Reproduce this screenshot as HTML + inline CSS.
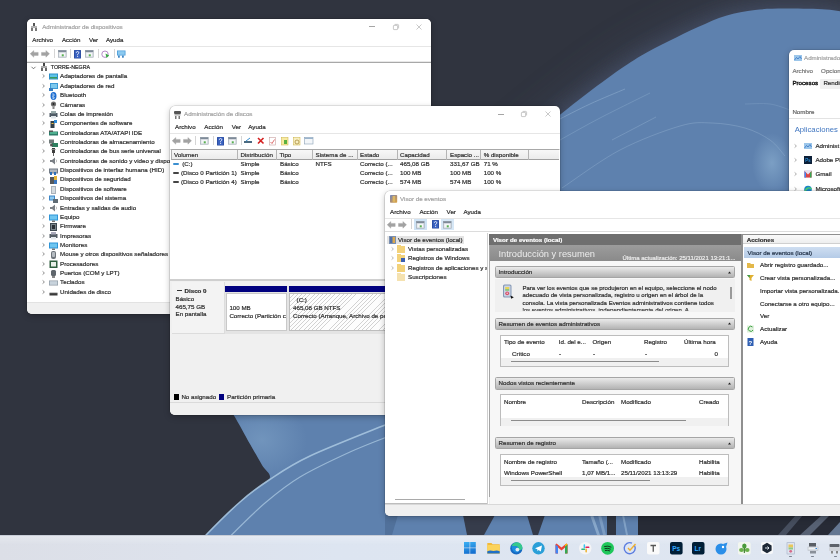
<!DOCTYPE html>
<html><head><meta charset="utf-8"><title>Windows</title>
<style>
html,body{margin:0;padding:0}
body{width:840px;height:560px;overflow:hidden;position:relative;-webkit-font-smoothing:antialiased;background:#30343f;font-family:"Liberation Sans",sans-serif}
.a{position:absolute;white-space:nowrap}
span.a{-webkit-text-stroke:0.2px currentColor}
.w{position:absolute;background:#fff;overflow:hidden;border-radius:5px;will-change:transform;box-shadow:0 0 0 0.6px rgba(0,0,0,0.18),0 2px 6px rgba(0,0,0,0.25)}
svg{overflow:visible}
</style></head><body>
<svg class="a" style="left:0;top:0" width="840" height="560" viewBox="0 0 840 560">
<defs><filter id="blur2" x="-30%" y="-30%" width="160%" height="160%"><feGaussianBlur stdDeviation="22"/></filter><clipPath id="blueclip"><path d="M850.0 13.0 C846.0 12.4 837.0 10.2 826.0 9.5 C815.0 8.8 795.8 8.5 784.0 8.6 C772.2 8.7 764.7 8.8 755.0 10.0 C745.3 11.2 735.5 12.9 726.0 15.7 C716.5 18.5 707.5 22.8 698.0 27.0 C688.5 31.2 678.5 36.2 669.0 41.0 C659.5 45.8 650.5 50.0 641.0 55.7 C631.5 61.4 624.5 66.0 612.0 75.0 C599.5 84.0 584.7 95.0 566.0 110.0 C547.3 125.0 531.0 138.3 500.0 165.0 C469.0 191.7 420.0 239.2 380.0 270.0 C340.0 300.8 287.5 330.3 260.0 350.0 C232.5 369.7 219.5 377.3 215.0 388.0 C210.5 398.7 227.2 404.7 233.0 414.0 C238.8 423.3 245.2 435.5 250.0 444.0 C254.8 452.5 258.8 459.0 262.0 465.0 C265.2 471.0 272.7 473.8 269.0 480.0 C265.3 486.2 250.3 493.0 240.0 502.0 C229.7 511.0 215.3 525.7 207.0 534.0 C198.7 542.3 192.8 549.0 190.0 552.0 L190 560 L850 560 Z"/></clipPath><clipPath id="topclip"><rect x="0" y="0" width="840" height="200"/></clipPath><filter id="blur" x="-20%" y="-20%" width="140%" height="140%"><feGaussianBlur stdDeviation="10"/></filter>
<radialGradient id="glow" cx="0.5" cy="0.5" r="0.5"><stop offset="0" stop-color="#8fb3d3" stop-opacity="0.7"/><stop offset="1" stop-color="#8fb3d3" stop-opacity="0"/></radialGradient><linearGradient id="topdark" x1="0" y1="0" x2="0" y2="1"><stop offset="0" stop-color="#262a34" stop-opacity="0.6"/><stop offset="1" stop-color="#262a34" stop-opacity="0"/></linearGradient>
</defs>
<rect width="840" height="560" fill="#30343f"/>
<path clip-path="url(#topclip)" filter="url(#blur2)" d="M850.0 13.0 C846.0 12.4 837.0 10.2 826.0 9.5 C815.0 8.8 795.8 8.5 784.0 8.6 C772.2 8.7 764.7 8.8 755.0 10.0 C745.3 11.2 735.5 12.9 726.0 15.7 C716.5 18.5 707.5 22.8 698.0 27.0 C688.5 31.2 678.5 36.2 669.0 41.0 C659.5 45.8 650.5 50.0 641.0 55.7 C631.5 61.4 624.5 66.0 612.0 75.0 C599.5 84.0 584.7 95.0 566.0 110.0 C547.3 125.0 531.0 138.3 500.0 165.0 C469.0 191.7 420.0 239.2 380.0 270.0 C340.0 300.8 287.5 330.3 260.0 350.0 C232.5 369.7 219.5 377.3 215.0 388.0 C210.5 398.7 227.2 404.7 233.0 414.0 C238.8 423.3 245.2 435.5 250.0 444.0 C254.8 452.5 258.8 459.0 262.0 465.0 C265.2 471.0 272.7 473.8 269.0 480.0 C265.3 486.2 250.3 493.0 240.0 502.0 C229.7 511.0 215.3 525.7 207.0 534.0 C198.7 542.3 192.8 549.0 190.0 552.0 L190 560 L850 560 Z" fill="#4d5a74" opacity="0.55"/>
<path clip-path="url(#topclip)" filter="url(#blur)" d="M850.0 13.0 C846.0 12.4 837.0 10.2 826.0 9.5 C815.0 8.8 795.8 8.5 784.0 8.6 C772.2 8.7 764.7 8.8 755.0 10.0 C745.3 11.2 735.5 12.9 726.0 15.7 C716.5 18.5 707.5 22.8 698.0 27.0 C688.5 31.2 678.5 36.2 669.0 41.0 C659.5 45.8 650.5 50.0 641.0 55.7 C631.5 61.4 624.5 66.0 612.0 75.0 C599.5 84.0 584.7 95.0 566.0 110.0 C547.3 125.0 531.0 138.3 500.0 165.0 C469.0 191.7 420.0 239.2 380.0 270.0 C340.0 300.8 287.5 330.3 260.0 350.0 C232.5 369.7 219.5 377.3 215.0 388.0 C210.5 398.7 227.2 404.7 233.0 414.0 C238.8 423.3 245.2 435.5 250.0 444.0 C254.8 452.5 258.8 459.0 262.0 465.0 C265.2 471.0 272.7 473.8 269.0 480.0 C265.3 486.2 250.3 493.0 240.0 502.0 C229.7 511.0 215.3 525.7 207.0 534.0 C198.7 542.3 192.8 549.0 190.0 552.0 L190 560 L850 560 Z" fill="#46516a" opacity="0.8"/>
<path d="M850.0 13.0 C846.0 12.4 837.0 10.2 826.0 9.5 C815.0 8.8 795.8 8.5 784.0 8.6 C772.2 8.7 764.7 8.8 755.0 10.0 C745.3 11.2 735.5 12.9 726.0 15.7 C716.5 18.5 707.5 22.8 698.0 27.0 C688.5 31.2 678.5 36.2 669.0 41.0 C659.5 45.8 650.5 50.0 641.0 55.7 C631.5 61.4 624.5 66.0 612.0 75.0 C599.5 84.0 584.7 95.0 566.0 110.0 C547.3 125.0 531.0 138.3 500.0 165.0 C469.0 191.7 420.0 239.2 380.0 270.0 C340.0 300.8 287.5 330.3 260.0 350.0 C232.5 369.7 219.5 377.3 215.0 388.0 C210.5 398.7 227.2 404.7 233.0 414.0 C238.8 423.3 245.2 435.5 250.0 444.0 C254.8 452.5 258.8 459.0 262.0 465.0 C265.2 471.0 272.7 473.8 269.0 480.0 C265.3 486.2 250.3 493.0 240.0 502.0 C229.7 511.0 215.3 525.7 207.0 534.0 C198.7 542.3 192.8 549.0 190.0 552.0 L190 560 L850 560 Z" fill="#5e81ae"/>
<ellipse clip-path="url(#blueclip)" cx="262" cy="440" rx="45" ry="38" fill="url(#glow)" opacity="0.55"/>
<path d="M195.0 548.0 C197.0 545.7 199.5 541.7 207.0 534.0 C214.5 526.3 229.7 511.0 240.0 502.0 C250.3 493.0 257.3 487.7 269.0 480.0 C280.7 472.3 289.8 465.5 310.0 456.0 C330.2 446.5 376.7 428.5 390.0 423.0 L390 560 L150 560 Z" fill="#5e81ae"/>
<path d="M195.0 548.0 C197.0 545.7 199.5 541.7 207.0 534.0 C214.5 526.3 229.7 511.0 240.0 502.0 C250.3 493.0 257.3 487.7 269.0 480.0 C280.7 472.3 289.8 465.5 310.0 456.0 C330.2 446.5 376.7 428.5 390.0 423.0" fill="none" stroke="#a6c4df" stroke-width="1.6" opacity="0.9"/>
<path d="M222.0 545.0 C223.8 543.2 225.3 541.0 232.5 534.0 C239.7 527.0 253.8 512.5 265.0 503.0 C276.2 493.5 285.8 485.5 300.0 477.0 C314.2 468.5 334.7 459.0 350.0 452.0 C365.3 445.0 385.0 437.8 392.0 435.0" fill="none" stroke="#a6c4df" stroke-width="1.2" opacity="0.8"/>
<path d="M558.0 120.0 C563.3 117.3 578.8 109.2 590.0 104.0 C601.2 98.8 619.2 91.5 625.0 89.0" fill="none" stroke="#9dbbd8" stroke-width="0.8" opacity="0.55"/>
<path d="M560.0 140.0 C566.7 136.3 585.0 125.8 600.0 118.0 C615.0 110.2 641.7 97.2 650.0 93.0" fill="none" stroke="#9dbbd8" stroke-width="0.7" opacity="0.45"/>
<path d="M612.0 140.0 C615.8 138.0 627.7 131.8 635.0 128.0 C642.3 124.2 652.5 118.8 656.0 117.0" fill="none" stroke="#9dbbd8" stroke-width="0.7" opacity="0.5"/>
<path d="M562.0 188.0 C571.7 181.7 600.3 160.3 620.0 150.0 C639.7 139.7 664.7 130.5 680.0 126.0 C695.3 121.5 701.2 122.7 712.0 123.0 C722.8 123.3 735.3 125.2 745.0 128.0 C754.7 130.8 763.3 135.3 770.0 140.0 C776.7 144.7 782.5 153.3 785.0 156.0" fill="none" stroke="#9dbbd8" stroke-width="0.7" opacity="0.5"/>
<path d="M745.0 104.0 C749.2 104.0 762.5 103.0 770.0 104.0 C777.5 105.0 786.7 109.0 790.0 110.0" fill="none" stroke="#9dbbd8" stroke-width="0.6" opacity="0.4"/>
<ellipse cx="772" cy="163" rx="20" ry="30" fill="url(#glow)" opacity="0.85"/>
<!-- strip below event viewer -->
<path d="M385 515 L398 515 L392 535 L385 535 Z" fill="#4e6d96" opacity="0.8"/>
<path d="M463 515 L495 515 L484 535 L467 535 Z" fill="#363c4b"/>
<path d="M527 515 L545 515 L538 535 L533 535 Z" fill="#343a49"/>
<path d="M590 515 L593 515 L600 535 L597 535 Z" fill="#9ab8d6" opacity="0.7"/>
<path d="M598 515 L601 515 L606 535 L603 535 Z" fill="#9ab8d6" opacity="0.5"/>
<path d="M607 515 L616 515 L616 535 L607 535 Z" fill="#2f3542"/>
<path d="M622 515 L624 515 L628 535 L626 535 Z" fill="#9ab8d6" opacity="0.6"/>
<path d="M638 515 L840 515 L840 535 L638 535 Z" fill="#272b36"/>
<path d="M778 535 L796 515 L803 515 L786 535 Z" fill="#4f5869" opacity="0.8"/>
<path d="M800 535 L822 515 L830 515 L810 535 Z" fill="#5d677a" opacity="0.9"/>
<path d="M828 535 L840 522 L840 535 Z" fill="#6b7f9c" opacity="0.9"/>
</svg>
<div class="w" style="left:27px;top:19px;width:404px;height:295px;"><div class="a" style="left:0.0px;top:0.0px;width:404.0px;height:28.0px;background:#fff"></div><svg class="a" style="left:4.0px;top:3.5px" width="6" height="8" viewBox="0 0 6 8"><rect x="2" y="0" width="2" height="3" fill="#555"/><rect x="0" y="3.5" width="6" height="1" fill="#666"/><rect x="0" y="5" width="2" height="3" fill="#777"/><rect x="4" y="5" width="2" height="3" fill="#777"/></svg><span class="a" style="left:15.2px;top:3.0px;font-size:6.2px;color:#a3a3a3;line-height:10px;">Administrador de dispositivos</span><div class="a" style="left:342.3px;top:7.1px;width:5.4px;height:0.6px;background:#a5a5a5"></div><svg class="a" style="left:365.5px;top:4.6px" width="6" height="6" viewBox="0 0 6 6"><rect x="0.4" y="1.4" width="4.2" height="4.2" rx="0.6" fill="none" stroke="#a5a5a5" stroke-width="0.6"/><path d="M1.6 0.4H4.6Q5.6 0.4 5.6 1.4V4.4" fill="none" stroke="#a5a5a5" stroke-width="0.6"/></svg><svg class="a" style="left:389.0px;top:4.6px" width="6" height="6" viewBox="0 0 6 6"><path d="M0.5 0.5L5.5 5.5M5.5 0.5L0.5 5.5" stroke="#a5a5a5" stroke-width="0.6"/></svg><span class="a" style="left:5.3px;top:16.3px;font-size:6.2px;color:#2e2e2e;line-height:10px;">Archivo</span><span class="a" style="left:34.9px;top:16.3px;font-size:6.2px;color:#2e2e2e;line-height:10px;">Acción</span><span class="a" style="left:61.9px;top:16.3px;font-size:6.2px;color:#2e2e2e;line-height:10px;">Ver</span><span class="a" style="left:79.0px;top:16.3px;font-size:6.2px;color:#2e2e2e;line-height:10px;">Ayuda</span><div class="a" style="left:0.0px;top:27.3px;width:404.0px;height:0.7px;background:#e6e6e6"></div><svg class="a" style="left:3.0px;top:30.5px" width="20" height="8" viewBox="0 0 20 8"><path d="M0.2 3.8L3.8 0.6V2.4H8.2V5.4H3.8V7.2Z" fill="#a2a2a2" stroke="#a2a2a2" stroke-width="0.4" stroke-linejoin="round"/><path d="M19.5 3.8L15.9 0.6V2.4H11.5V5.4H15.9V7.2Z" fill="#a2a2a2" stroke="#a2a2a2" stroke-width="0.4" stroke-linejoin="round"/></svg><div class="a" style="left:26.7px;top:29.5px;width:0.7px;height:9.0px;background:#d5d5d5"></div><svg class="a" style="left:30.5px;top:30.5px" width="8.5" height="7.5" viewBox="0 0 8.5 7.5"><rect x="0.3" y="0.3" width="7.9" height="6.9" fill="#dfe3e8" stroke="#9aa3ad" stroke-width="0.6"/><rect x="0.3" y="0.3" width="7.9" height="1.8" fill="#7e8a98"/><rect x="1.5" y="3" width="5.5" height="3.3" fill="#f4f6f8"/><rect x="3.75" y="4.3" width="2" height="2" fill="#58b050"/></svg><div class="a" style="left:43.0px;top:29.5px;width:0.7px;height:9.0px;background:#d5d5d5"></div><svg class="a" style="left:47.0px;top:30.5px" width="7" height="8.5" viewBox="0 0 7 8.5"><rect x="0" y="0" width="7" height="8.5" rx="0.6" fill="#2c4d9e"/><rect x="0.8" y="0.5" width="5.4" height="7.5" fill="#3a62c0"/><path d="M2.3 2.8Q2.5 1.5 3.6 1.5Q4.8 1.6 4.8 2.8Q4.7 3.6 3.6 4.3V5.3" fill="none" stroke="#fff" stroke-width="0.8"/><rect x="3.2" y="6" width="0.9" height="0.9" fill="#fff"/></svg><svg class="a" style="left:58.0px;top:30.5px" width="8.5" height="7.5" viewBox="0 0 8.5 7.5"><rect x="0.3" y="0.3" width="7.9" height="6.9" fill="#dfe3e8" stroke="#9aa3ad" stroke-width="0.6"/><rect x="0.3" y="0.3" width="7.9" height="1.8" fill="#7e8a98"/><rect x="1.5" y="3" width="5.5" height="3.3" fill="#f4f6f8"/><rect x="3.75" y="4.3" width="2" height="2" fill="#58b050"/></svg><div class="a" style="left:70.5px;top:29.5px;width:0.7px;height:9.0px;background:#d5d5d5"></div><svg class="a" style="left:74.4px;top:30.5px" width="8.5" height="8" viewBox="0 0 8.5 8"><circle cx="4" cy="4.2" r="3.2" fill="none" stroke="#b58ac8" stroke-width="1"/><path d="M4.5 3.5L8.2 5.5L5.5 8Z" fill="#3aa845"/></svg><div class="a" style="left:86.7px;top:29.5px;width:0.7px;height:9.0px;background:#d5d5d5"></div><svg class="a" style="left:90.2px;top:30.5px" width="8.5" height="8" viewBox="0 0 8.5 8"><rect x="0" y="0.5" width="8.5" height="5" fill="#4a9bd8"/><rect x="0.8" y="1.2" width="6.9" height="3.6" fill="#8ccaf0"/><rect x="1" y="5.5" width="1.8" height="2.2" fill="#3f86c4"/><rect x="5" y="5.5" width="1.8" height="2.2" fill="#3f86c4"/></svg><div class="a" style="left:0.0px;top:42.6px;width:404.0px;height:1.0px;background:#a8a8a8"></div><div class="a" style="left:0.0px;top:41.6px;width:404.0px;height:1.0px;background:#e8e8e8"></div><svg class="a" style="left:4.0px;top:46.8px" width="5" height="4" viewBox="0 0 5 4"><path d="M0.5 0.8L2.5 2.8L4.5 0.8" fill="none" stroke="#444" stroke-width="0.7"/></svg><svg class="a" style="left:13.5px;top:44.2px" width="6" height="7.5" viewBox="0 0 6 7.5"><rect x="2" y="0" width="2" height="3" fill="#444"/><rect x="0" y="3.5" width="6" height="1" fill="#555"/><rect x="0" y="5" width="2" height="3" fill="#666"/><rect x="4" y="5" width="2" height="3" fill="#666"/></svg><span class="a" style="left:23.8px;top:43.1px;font-size:5.35px;color:#2e2e2e;line-height:10px;">TORRE-NEGRA</span><svg class="a" style="left:15.0px;top:55.4px" width="3" height="4" viewBox="0 0 3 4"><path d="M0.6 0.4L2.4 2L0.6 3.6" fill="none" stroke="#6a6a6a" stroke-width="0.75"/></svg><svg class="a" style="left:22.3px;top:54.1px" width="9" height="8" viewBox="0 0 9 8"><rect x="0" y="0.5" width="9" height="6" fill="#2e8fc9"/><rect x="1" y="1.5" width="7" height="4" fill="#5cc3e8"/><rect x="1" y="4" width="7" height="1.5" fill="#3a9a5a"/></svg><span class="a" style="left:33.1px;top:52.4px;font-size:6.2px;color:#2e2e2e;line-height:10px;">Adaptadores de pantalla</span><svg class="a" style="left:15.0px;top:64.8px" width="3" height="4" viewBox="0 0 3 4"><path d="M0.6 0.4L2.4 2L0.6 3.6" fill="none" stroke="#6a6a6a" stroke-width="0.75"/></svg><svg class="a" style="left:22.3px;top:63.5px" width="9" height="8" viewBox="0 0 9 8"><rect x="1" y="0" width="8" height="6" fill="#3d9ad6"/><rect x="2" y="1" width="6" height="4" fill="#7cc8ee"/><rect x="0" y="5" width="4" height="3" fill="#3a7fc0"/></svg><span class="a" style="left:33.1px;top:61.8px;font-size:6.2px;color:#2e2e2e;line-height:10px;">Adaptadores de red</span><svg class="a" style="left:15.0px;top:74.1px" width="3" height="4" viewBox="0 0 3 4"><path d="M0.6 0.4L2.4 2L0.6 3.6" fill="none" stroke="#6a6a6a" stroke-width="0.75"/></svg><svg class="a" style="left:22.3px;top:72.8px" width="9" height="8" viewBox="0 0 9 8"><ellipse cx="4.5" cy="4" rx="3" ry="4" fill="#1f6fd1"/><path d="M4 1.5L5.5 3L4 4.5L5.5 6L4 7V1.5" fill="none" stroke="#fff" stroke-width="0.6"/></svg><span class="a" style="left:33.1px;top:71.1px;font-size:6.2px;color:#2e2e2e;line-height:10px;">Bluetooth</span><svg class="a" style="left:15.0px;top:83.5px" width="3" height="4" viewBox="0 0 3 4"><path d="M0.6 0.4L2.4 2L0.6 3.6" fill="none" stroke="#6a6a6a" stroke-width="0.75"/></svg><svg class="a" style="left:22.3px;top:82.2px" width="9" height="8" viewBox="0 0 9 8"><circle cx="4.5" cy="3" r="2.6" fill="#6f6f6f"/><circle cx="4.5" cy="3" r="1" fill="#222"/><rect x="3.5" y="5.5" width="2" height="2.5" fill="#888"/></svg><span class="a" style="left:33.1px;top:80.5px;font-size:6.2px;color:#2e2e2e;line-height:10px;">Cámaras</span><svg class="a" style="left:15.0px;top:92.9px" width="3" height="4" viewBox="0 0 3 4"><path d="M0.6 0.4L2.4 2L0.6 3.6" fill="none" stroke="#6a6a6a" stroke-width="0.75"/></svg><svg class="a" style="left:22.3px;top:91.6px" width="9" height="8" viewBox="0 0 9 8"><rect x="0.5" y="2" width="8" height="4" fill="#4f5b66"/><rect x="2" y="0" width="5" height="2.5" fill="#9aa"/><rect x="2" y="5" width="5" height="2.5" fill="#dfe6ea"/></svg><span class="a" style="left:33.1px;top:89.9px;font-size:6.2px;color:#2e2e2e;line-height:10px;">Colas de impresión</span><svg class="a" style="left:15.0px;top:102.2px" width="3" height="4" viewBox="0 0 3 4"><path d="M0.6 0.4L2.4 2L0.6 3.6" fill="none" stroke="#6a6a6a" stroke-width="0.75"/></svg><svg class="a" style="left:22.3px;top:100.9px" width="9" height="8" viewBox="0 0 9 8"><rect x="1.5" y="1" width="4" height="7" fill="#33404a"/><rect x="5" y="0" width="3" height="3" fill="#2c8ad6"/><rect x="2.5" y="3" width="2" height="1" fill="#f0c040"/></svg><span class="a" style="left:33.1px;top:99.2px;font-size:6.2px;color:#2e2e2e;line-height:10px;">Componentes de software</span><svg class="a" style="left:15.0px;top:111.6px" width="3" height="4" viewBox="0 0 3 4"><path d="M0.6 0.4L2.4 2L0.6 3.6" fill="none" stroke="#6a6a6a" stroke-width="0.75"/></svg><svg class="a" style="left:22.3px;top:110.3px" width="9" height="8" viewBox="0 0 9 8"><rect x="0" y="2.5" width="9" height="4" fill="#2d7d6a"/><rect x="1" y="3" width="7" height="2" fill="#4fb08f"/><rect x="0" y="1.5" width="4" height="1.5" fill="#555"/></svg><span class="a" style="left:33.1px;top:108.6px;font-size:6.2px;color:#2e2e2e;line-height:10px;">Controladoras ATA/ATAPI IDE</span><svg class="a" style="left:15.0px;top:121.0px" width="3" height="4" viewBox="0 0 3 4"><path d="M0.6 0.4L2.4 2L0.6 3.6" fill="none" stroke="#6a6a6a" stroke-width="0.75"/></svg><svg class="a" style="left:22.3px;top:119.7px" width="9" height="8" viewBox="0 0 9 8"><rect x="0" y="0.5" width="5" height="4" fill="#707a7a"/><rect x="3" y="4" width="6" height="4" fill="#2e8060"/><circle cx="2.5" cy="6" r="1.5" fill="#555"/></svg><span class="a" style="left:33.1px;top:118.0px;font-size:6.2px;color:#2e2e2e;line-height:10px;">Controladoras de almacenamiento</span><svg class="a" style="left:15.0px;top:130.3px" width="3" height="4" viewBox="0 0 3 4"><path d="M0.6 0.4L2.4 2L0.6 3.6" fill="none" stroke="#6a6a6a" stroke-width="0.75"/></svg><svg class="a" style="left:22.3px;top:129.0px" width="9" height="8" viewBox="0 0 9 8"><rect x="3" y="0" width="3" height="5" fill="#3d3d3d"/><rect x="4" y="5" width="1" height="3" fill="#666"/><rect x="2.5" y="1" width="4" height="1" fill="#888"/></svg><span class="a" style="left:33.1px;top:127.3px;font-size:6.2px;color:#2e2e2e;line-height:10px;">Controladoras de bus serie universal</span><svg class="a" style="left:15.0px;top:139.7px" width="3" height="4" viewBox="0 0 3 4"><path d="M0.6 0.4L2.4 2L0.6 3.6" fill="none" stroke="#6a6a6a" stroke-width="0.75"/></svg><svg class="a" style="left:22.3px;top:138.4px" width="9" height="8" viewBox="0 0 9 8"><path d="M1 3H3L6 0.5V7.5L3 5H1Z" fill="#7a7f85"/><path d="M7 2.5Q8.5 4 7 5.5" fill="none" stroke="#999" stroke-width="0.6"/></svg><span class="a" style="left:33.1px;top:136.7px;font-size:6.2px;color:#2e2e2e;line-height:10px;">Controladoras de sonido y video y dispo</span><svg class="a" style="left:15.0px;top:149.1px" width="3" height="4" viewBox="0 0 3 4"><path d="M0.6 0.4L2.4 2L0.6 3.6" fill="none" stroke="#6a6a6a" stroke-width="0.75"/></svg><svg class="a" style="left:22.3px;top:147.8px" width="9" height="8" viewBox="0 0 9 8"><rect x="0" y="1.5" width="9" height="5" fill="#747d87"/><rect x="1" y="2.5" width="7" height="3" fill="#aeb6be"/><rect x="1" y="5" width="2" height="3" fill="#2d6fb8"/><rect x="5" y="5" width="2" height="3" fill="#2d6fb8"/></svg><span class="a" style="left:33.1px;top:146.1px;font-size:6.2px;color:#2e2e2e;line-height:10px;">Dispositivos de interfaz humana (HID)</span><svg class="a" style="left:15.0px;top:158.4px" width="3" height="4" viewBox="0 0 3 4"><path d="M0.6 0.4L2.4 2L0.6 3.6" fill="none" stroke="#6a6a6a" stroke-width="0.75"/></svg><svg class="a" style="left:22.3px;top:157.1px" width="9" height="8" viewBox="0 0 9 8"><rect x="1" y="1" width="4" height="7" fill="#55585b"/><rect x="5" y="0" width="3" height="4" fill="#e3b53a"/><rect x="5" y="4" width="3" height="4" fill="#3a76c0"/></svg><span class="a" style="left:33.1px;top:155.4px;font-size:6.2px;color:#2e2e2e;line-height:10px;">Dispositivos de seguridad</span><svg class="a" style="left:15.0px;top:167.8px" width="3" height="4" viewBox="0 0 3 4"><path d="M0.6 0.4L2.4 2L0.6 3.6" fill="none" stroke="#6a6a6a" stroke-width="0.75"/></svg><svg class="a" style="left:22.3px;top:166.5px" width="9" height="8" viewBox="0 0 9 8"><rect x="2" y="0" width="5" height="8" fill="#aab2ba"/><rect x="3" y="1" width="3" height="6" fill="#d5dbe0"/></svg><span class="a" style="left:33.1px;top:164.8px;font-size:6.2px;color:#2e2e2e;line-height:10px;">Dispositivos de software</span><svg class="a" style="left:15.0px;top:177.1px" width="3" height="4" viewBox="0 0 3 4"><path d="M0.6 0.4L2.4 2L0.6 3.6" fill="none" stroke="#6a6a6a" stroke-width="0.75"/></svg><svg class="a" style="left:22.3px;top:175.8px" width="9" height="8" viewBox="0 0 9 8"><rect x="0" y="0.5" width="6" height="5" fill="#3c86c8"/><rect x="1" y="1.5" width="4" height="3" fill="#8fcaf0"/><rect x="4" y="4" width="5" height="4" fill="#5f6b74"/></svg><span class="a" style="left:33.1px;top:174.1px;font-size:6.2px;color:#2e2e2e;line-height:10px;">Dispositivos del sistema</span><svg class="a" style="left:15.0px;top:186.5px" width="3" height="4" viewBox="0 0 3 4"><path d="M0.6 0.4L2.4 2L0.6 3.6" fill="none" stroke="#6a6a6a" stroke-width="0.75"/></svg><svg class="a" style="left:22.3px;top:185.2px" width="9" height="8" viewBox="0 0 9 8"><path d="M1 3H3L6 0.5V7.5L3 5H1Z" fill="#7a7f85"/><path d="M7 2.5Q8.5 4 7 5.5" fill="none" stroke="#999" stroke-width="0.6"/></svg><span class="a" style="left:33.1px;top:183.5px;font-size:6.2px;color:#2e2e2e;line-height:10px;">Entradas y salidas de audio</span><svg class="a" style="left:15.0px;top:195.9px" width="3" height="4" viewBox="0 0 3 4"><path d="M0.6 0.4L2.4 2L0.6 3.6" fill="none" stroke="#6a6a6a" stroke-width="0.75"/></svg><svg class="a" style="left:22.3px;top:194.6px" width="9" height="8" viewBox="0 0 9 8"><rect x="0" y="0.5" width="9" height="6" fill="#2f95d8"/><rect x="1" y="1.5" width="7" height="4" fill="#6fc6f0"/><rect x="3" y="6.5" width="3" height="1.5" fill="#777"/></svg><span class="a" style="left:33.1px;top:192.9px;font-size:6.2px;color:#2e2e2e;line-height:10px;">Equipo</span><svg class="a" style="left:15.0px;top:205.2px" width="3" height="4" viewBox="0 0 3 4"><path d="M0.6 0.4L2.4 2L0.6 3.6" fill="none" stroke="#6a6a6a" stroke-width="0.75"/></svg><svg class="a" style="left:22.3px;top:203.9px" width="9" height="8" viewBox="0 0 9 8"><rect x="1" y="0" width="7" height="8" fill="#3f4a52"/><rect x="2" y="1" width="5" height="6" fill="#7a858c"/><rect x="3" y="2" width="3" height="4" fill="#2a3036"/></svg><span class="a" style="left:33.1px;top:202.2px;font-size:6.2px;color:#2e2e2e;line-height:10px;">Firmware</span><svg class="a" style="left:15.0px;top:214.6px" width="3" height="4" viewBox="0 0 3 4"><path d="M0.6 0.4L2.4 2L0.6 3.6" fill="none" stroke="#6a6a6a" stroke-width="0.75"/></svg><svg class="a" style="left:22.3px;top:213.3px" width="9" height="8" viewBox="0 0 9 8"><rect x="0.5" y="2" width="8" height="4" fill="#555e66"/><rect x="2" y="0" width="5" height="2.5" fill="#aab"/><rect x="2" y="5" width="5" height="2.5" fill="#e5eaee"/></svg><span class="a" style="left:33.1px;top:211.6px;font-size:6.2px;color:#2e2e2e;line-height:10px;">Impresoras</span><svg class="a" style="left:15.0px;top:224.0px" width="3" height="4" viewBox="0 0 3 4"><path d="M0.6 0.4L2.4 2L0.6 3.6" fill="none" stroke="#6a6a6a" stroke-width="0.75"/></svg><svg class="a" style="left:22.3px;top:222.7px" width="9" height="8" viewBox="0 0 9 8"><rect x="0" y="0.5" width="9" height="6" fill="#2f95d8"/><rect x="1" y="1.5" width="7" height="4" fill="#6fc6f0"/><rect x="3" y="6.5" width="3" height="1.5" fill="#777"/></svg><span class="a" style="left:33.1px;top:221.0px;font-size:6.2px;color:#2e2e2e;line-height:10px;">Monitores</span><svg class="a" style="left:15.0px;top:233.3px" width="3" height="4" viewBox="0 0 3 4"><path d="M0.6 0.4L2.4 2L0.6 3.6" fill="none" stroke="#6a6a6a" stroke-width="0.75"/></svg><svg class="a" style="left:22.3px;top:232.0px" width="9" height="8" viewBox="0 0 9 8"><rect x="2" y="0" width="5" height="8" rx="2" fill="#6d747b"/><rect x="3" y="1" width="3" height="5" rx="1" fill="#b6bcc2"/></svg><span class="a" style="left:33.1px;top:230.3px;font-size:6.2px;color:#2e2e2e;line-height:10px;">Mouse y otros dispositivos señaladores</span><svg class="a" style="left:15.0px;top:242.7px" width="3" height="4" viewBox="0 0 3 4"><path d="M0.6 0.4L2.4 2L0.6 3.6" fill="none" stroke="#6a6a6a" stroke-width="0.75"/></svg><svg class="a" style="left:22.3px;top:241.4px" width="9" height="8" viewBox="0 0 9 8"><rect x="0.5" y="0.5" width="8" height="7.5" fill="#2e5e3e"/><rect x="2" y="2" width="5" height="4.5" fill="#e8efe8"/></svg><span class="a" style="left:33.1px;top:239.7px;font-size:6.2px;color:#2e2e2e;line-height:10px;">Procesadores</span><svg class="a" style="left:15.0px;top:252.1px" width="3" height="4" viewBox="0 0 3 4"><path d="M0.6 0.4L2.4 2L0.6 3.6" fill="none" stroke="#6a6a6a" stroke-width="0.75"/></svg><svg class="a" style="left:22.3px;top:250.8px" width="9" height="8" viewBox="0 0 9 8"><rect x="2" y="0" width="5" height="6" rx="1.5" fill="#5f666c"/><rect x="3" y="6" width="3" height="2" fill="#888"/></svg><span class="a" style="left:33.1px;top:249.1px;font-size:6.2px;color:#2e2e2e;line-height:10px;">Puertos (COM y LPT)</span><svg class="a" style="left:15.0px;top:261.4px" width="3" height="4" viewBox="0 0 3 4"><path d="M0.6 0.4L2.4 2L0.6 3.6" fill="none" stroke="#6a6a6a" stroke-width="0.75"/></svg><svg class="a" style="left:22.3px;top:260.1px" width="9" height="8" viewBox="0 0 9 8"><rect x="0" y="1.5" width="9" height="5" fill="#8f9aa4"/><rect x="0.7" y="2.2" width="7.6" height="3.6" fill="#c8d3dc"/></svg><span class="a" style="left:33.1px;top:258.4px;font-size:6.2px;color:#2e2e2e;line-height:10px;">Teclados</span><svg class="a" style="left:15.0px;top:270.8px" width="3" height="4" viewBox="0 0 3 4"><path d="M0.6 0.4L2.4 2L0.6 3.6" fill="none" stroke="#6a6a6a" stroke-width="0.75"/></svg><svg class="a" style="left:22.3px;top:269.5px" width="9" height="8" viewBox="0 0 9 8"><rect x="0.5" y="4" width="8" height="2.5" fill="#3a3a3a"/><rect x="0.5" y="3.5" width="8" height="0.7" fill="#999"/></svg><span class="a" style="left:33.1px;top:267.8px;font-size:6.2px;color:#2e2e2e;line-height:10px;">Unidades de disco</span><div class="a" style="left:0.0px;top:282.5px;width:404.0px;height:12.5px;background:#f0f0f0;border-top:0.7px solid #e2e2e2"></div></div>
<div class="w" style="left:170px;top:105.5px;width:390px;height:309px;"><svg class="a" style="left:4.0px;top:5.0px" width="7" height="8" viewBox="0 0 7 8"><rect x="0" y="0" width="7" height="3" rx="1" fill="#555"/><rect x="0.5" y="3.5" width="6" height="0.8" fill="#666"/><rect x="1" y="5" width="1.5" height="3" fill="#777"/><rect x="4.5" y="5" width="1.5" height="3" fill="#777"/></svg><span class="a" style="left:14.0px;top:2.9px;font-size:6.2px;color:#a3a3a3;line-height:10px;">Administración de discos</span><div class="a" style="left:328.3px;top:7.8px;width:5.4px;height:0.6px;background:#a5a5a5"></div><svg class="a" style="left:351.0px;top:5.3px" width="6" height="6" viewBox="0 0 6 6"><rect x="0.4" y="1.4" width="4.2" height="4.2" rx="0.6" fill="none" stroke="#a5a5a5" stroke-width="0.6"/><path d="M1.6 0.4H4.6Q5.6 0.4 5.6 1.4V4.4" fill="none" stroke="#a5a5a5" stroke-width="0.6"/></svg><svg class="a" style="left:374.5px;top:5.3px" width="6" height="6" viewBox="0 0 6 6"><path d="M0.5 0.5L5.5 5.5M5.5 0.5L0.5 5.5" stroke="#a5a5a5" stroke-width="0.6"/></svg><span class="a" style="left:5.0px;top:16.3px;font-size:6.2px;color:#2e2e2e;line-height:10px;">Archivo</span><span class="a" style="left:34.3px;top:16.3px;font-size:6.2px;color:#2e2e2e;line-height:10px;">Acción</span><span class="a" style="left:61.7px;top:16.3px;font-size:6.2px;color:#2e2e2e;line-height:10px;">Ver</span><span class="a" style="left:78.3px;top:16.3px;font-size:6.2px;color:#2e2e2e;line-height:10px;">Ayuda</span><div class="a" style="left:0.0px;top:26.9px;width:390.0px;height:0.7px;background:#e6e6e6"></div><svg class="a" style="left:1.6px;top:30.9px" width="20" height="8" viewBox="0 0 20 8"><path d="M0.2 3.8L3.8 0.6V2.4H8.2V5.4H3.8V7.2Z" fill="#a2a2a2" stroke="#a2a2a2" stroke-width="0.4" stroke-linejoin="round"/><path d="M19.5 3.8L15.9 0.6V2.4H11.5V5.4H15.9V7.2Z" fill="#a2a2a2" stroke="#a2a2a2" stroke-width="0.4" stroke-linejoin="round"/></svg><div class="a" style="left:25.4px;top:30.2px;width:0.7px;height:9.0px;background:#d5d5d5"></div><svg class="a" style="left:30.0px;top:30.9px" width="8.5" height="7.5" viewBox="0 0 8.5 7.5"><rect x="0.3" y="0.3" width="7.9" height="6.9" fill="#dfe3e8" stroke="#9aa3ad" stroke-width="0.6"/><rect x="0.3" y="0.3" width="7.9" height="1.8" fill="#7e8a98"/><rect x="1.5" y="3" width="5.5" height="3.3" fill="#f4f6f8"/><rect x="3.75" y="4.3" width="2" height="2" fill="#58b050"/></svg><div class="a" style="left:43.0px;top:30.2px;width:0.7px;height:9.0px;background:#d5d5d5"></div><svg class="a" style="left:47.0px;top:30.7px" width="7" height="8.5" viewBox="0 0 7 8.5"><rect x="0" y="0" width="7" height="8.5" rx="0.6" fill="#2c4d9e"/><rect x="0.8" y="0.5" width="5.4" height="7.5" fill="#3a62c0"/><path d="M2.3 2.8Q2.5 1.5 3.6 1.5Q4.8 1.6 4.8 2.8Q4.7 3.6 3.6 4.3V5.3" fill="none" stroke="#fff" stroke-width="0.8"/><rect x="3.2" y="6" width="0.9" height="0.9" fill="#fff"/></svg><svg class="a" style="left:58.0px;top:30.9px" width="8.5" height="7.5" viewBox="0 0 8.5 7.5"><rect x="0.3" y="0.3" width="7.9" height="6.9" fill="#dfe3e8" stroke="#9aa3ad" stroke-width="0.6"/><rect x="0.3" y="0.3" width="7.9" height="1.8" fill="#7e8a98"/><rect x="1.5" y="3" width="5.5" height="3.3" fill="#f4f6f8"/><rect x="3.75" y="4.3" width="2" height="2" fill="#58b050"/></svg><div class="a" style="left:70.6px;top:30.2px;width:0.7px;height:9.0px;background:#d5d5d5"></div><svg class="a" style="left:74.0px;top:30.7px" width="9" height="8" viewBox="0 0 9 8"><rect x="0" y="4" width="8" height="2" fill="#4a6a80"/><path d="M2 4L6 1" stroke="#3a8fd0" stroke-width="1"/></svg><svg class="a" style="left:87.0px;top:30.9px" width="7.5" height="7.5" viewBox="0 0 7.5 7.5"><path d="M1 1L6.5 6.5M6.5 1L1 6.5" stroke="#d42020" stroke-width="1.6"/></svg><svg class="a" style="left:99.0px;top:30.7px" width="7" height="8.5" viewBox="0 0 7 8.5"><rect x="0.5" y="0.5" width="6" height="7.5" fill="#fff" stroke="#c9a0a0" stroke-width="0.6"/><path d="M1.5 5L3 6.5L5.5 2.5" fill="none" stroke="#d03030" stroke-width="0.7"/></svg><svg class="a" style="left:111.0px;top:30.7px" width="7.5" height="8.5" viewBox="0 0 7.5 8.5"><rect x="0.5" y="0.5" width="6.5" height="7.5" fill="#f7eaa0" stroke="#c9b040" stroke-width="0.5"/><rect x="3" y="3" width="3" height="4" fill="#5ab040"/></svg><svg class="a" style="left:123.0px;top:30.7px" width="7.5" height="8.5" viewBox="0 0 7.5 8.5"><rect x="0.5" y="0.5" width="6.5" height="7.5" fill="#f8efc0" stroke="#c9b040" stroke-width="0.5"/><circle cx="4" cy="5" r="2" fill="none" stroke="#a08030" stroke-width="0.7"/></svg><svg class="a" style="left:133.7px;top:30.9px" width="9.5" height="7.5" viewBox="0 0 9.5 7.5"><rect x="0.5" y="0.5" width="8.5" height="6.5" fill="#f3f6f9" stroke="#8aa0b6" stroke-width="0.6"/><rect x="0.5" y="0.5" width="8.5" height="1.5" fill="#9bb4cc"/></svg><div class="a" style="left:0.0px;top:43.0px;width:390.0px;height:0.8px;background:#d6d6d6"></div><div class="a" style="left:0.8px;top:43.1px;width:388.0px;height:10.8px;background:linear-gradient(#f7f7f7,#ebebeb);border-bottom:0.9px solid #a0a0a0;border-top:1.2px solid #a8a8a8;border-left:0.8px solid #b0b0b0;box-sizing:border-box"></div><div class="a" style="left:67.0px;top:44.3px;width:0.7px;height:9.5px;background:#b5b5b5"></div><div class="a" style="left:106.3px;top:44.3px;width:0.7px;height:9.5px;background:#b5b5b5"></div><div class="a" style="left:142.0px;top:44.3px;width:0.7px;height:9.5px;background:#b5b5b5"></div><div class="a" style="left:187.0px;top:44.3px;width:0.7px;height:9.5px;background:#b5b5b5"></div><div class="a" style="left:227.0px;top:44.3px;width:0.7px;height:9.5px;background:#b5b5b5"></div><div class="a" style="left:276.0px;top:44.3px;width:0.7px;height:9.5px;background:#b5b5b5"></div><div class="a" style="left:310.0px;top:44.3px;width:0.7px;height:9.5px;background:#b5b5b5"></div><div class="a" style="left:357.5px;top:44.3px;width:0.7px;height:9.5px;background:#b5b5b5"></div><span class="a" style="left:4.0px;top:44.2px;font-size:6.2px;color:#2e2e2e;line-height:10px;">Volumen</span><span class="a" style="left:70.5px;top:44.2px;font-size:6.2px;color:#2e2e2e;line-height:10px;">Distribución</span><span class="a" style="left:109.5px;top:44.2px;font-size:6.2px;color:#2e2e2e;line-height:10px;">Tipo</span><span class="a" style="left:145.5px;top:44.2px;font-size:6.2px;color:#2e2e2e;line-height:10px;">Sistema de ...</span><span class="a" style="left:190.0px;top:44.2px;font-size:6.2px;color:#2e2e2e;line-height:10px;">Estado</span><span class="a" style="left:230.0px;top:44.2px;font-size:6.2px;color:#2e2e2e;line-height:10px;">Capacidad</span><span class="a" style="left:280.0px;top:44.2px;font-size:6.2px;color:#2e2e2e;line-height:10px;">Espacio ...</span><span class="a" style="left:313.7px;top:44.2px;font-size:6.2px;color:#2e2e2e;line-height:10px;">% disponible</span><div class="a" style="left:2.5px;top:56.6px;width:6.8px;height:2.8px;background:#3a8fd0;border-radius:1px"></div><span class="a" style="left:12.3px;top:53.1px;font-size:6.2px;color:#2e2e2e;line-height:10px;">(C:)</span><span class="a" style="left:70.6px;top:53.1px;font-size:6.2px;color:#2e2e2e;line-height:10px;">Simple</span><span class="a" style="left:110.0px;top:53.1px;font-size:6.2px;color:#2e2e2e;line-height:10px;">Básico</span><span class="a" style="left:145.6px;top:53.1px;font-size:6.2px;color:#2e2e2e;line-height:10px;">NTFS</span><span class="a" style="left:190.0px;top:53.1px;font-size:6.2px;color:#2e2e2e;line-height:10px;">Correcto (...</span><span class="a" style="left:230.0px;top:53.1px;font-size:6.2px;color:#2e2e2e;line-height:10px;">465,08 GB</span><span class="a" style="left:280.0px;top:53.1px;font-size:6.2px;color:#2e2e2e;line-height:10px;">331,67 GB</span><span class="a" style="left:313.7px;top:53.1px;font-size:6.2px;color:#2e2e2e;line-height:10px;">71 %</span><div class="a" style="left:2.5px;top:65.7px;width:6.8px;height:2.0px;background:#444;border-radius:1px"></div><span class="a" style="left:11.0px;top:62.2px;font-size:6.2px;color:#2e2e2e;line-height:10px;">(Disco 0 Partición 1)</span><span class="a" style="left:70.6px;top:62.2px;font-size:6.2px;color:#2e2e2e;line-height:10px;">Simple</span><span class="a" style="left:110.0px;top:62.2px;font-size:6.2px;color:#2e2e2e;line-height:10px;">Básico</span><span class="a" style="left:190.0px;top:62.2px;font-size:6.2px;color:#2e2e2e;line-height:10px;">Correcto (...</span><span class="a" style="left:230.0px;top:62.2px;font-size:6.2px;color:#2e2e2e;line-height:10px;">100 MB</span><span class="a" style="left:280.0px;top:62.2px;font-size:6.2px;color:#2e2e2e;line-height:10px;">100 MB</span><span class="a" style="left:313.7px;top:62.2px;font-size:6.2px;color:#2e2e2e;line-height:10px;">100 %</span><div class="a" style="left:2.5px;top:74.8px;width:6.8px;height:2.0px;background:#444;border-radius:1px"></div><span class="a" style="left:11.0px;top:71.3px;font-size:6.2px;color:#2e2e2e;line-height:10px;">(Disco 0 Partición 4)</span><span class="a" style="left:70.6px;top:71.3px;font-size:6.2px;color:#2e2e2e;line-height:10px;">Simple</span><span class="a" style="left:110.0px;top:71.3px;font-size:6.2px;color:#2e2e2e;line-height:10px;">Básico</span><span class="a" style="left:190.0px;top:71.3px;font-size:6.2px;color:#2e2e2e;line-height:10px;">Correcto (...</span><span class="a" style="left:230.0px;top:71.3px;font-size:6.2px;color:#2e2e2e;line-height:10px;">574 MB</span><span class="a" style="left:280.0px;top:71.3px;font-size:6.2px;color:#2e2e2e;line-height:10px;">574 MB</span><span class="a" style="left:313.7px;top:71.3px;font-size:6.2px;color:#2e2e2e;line-height:10px;">100 %</span><div class="a" style="left:0.0px;top:173.1px;width:390.0px;height:1.6px;background:#cfcfcf"></div><div class="a" style="left:0.0px;top:174.7px;width:390.0px;height:121.0px;background:#f0f0f0"></div><div class="a" style="left:1.5px;top:176.0px;width:52.0px;height:51.0px;background:#f3f3f3;border-right:0.7px solid #dcdcdc;border-bottom:0.7px solid #dcdcdc"></div><div class="a" style="left:6.5px;top:183.7px;width:5.5px;height:1.3px;background:#333"></div><span class="a" style="left:14.5px;top:180.1px;font-size:6.2px;color:#2e2e2e;line-height:10px;font-weight:bold;">Disco 0</span><span class="a" style="left:5.5px;top:188.3px;font-size:6.2px;color:#2e2e2e;line-height:10px;">Básico</span><span class="a" style="left:5.5px;top:195.8px;font-size:6.2px;color:#2e2e2e;line-height:10px;">465,75 GB</span><span class="a" style="left:5.5px;top:203.3px;font-size:6.2px;color:#2e2e2e;line-height:10px;">En pantalla</span><div class="a" style="left:55.0px;top:180.0px;width:390.0px;height:47.5px;background:#e4e4e4"></div><div class="a" style="left:55.3px;top:180.3px;width:61.7px;height:6.2px;background:#00007f"></div><div class="a" style="left:119.0px;top:180.3px;width:271.0px;height:6.2px;background:#00007f"></div><div class="a" style="left:55.5px;top:186.5px;width:61.3px;height:38.5px;background:#fff;border:0.8px solid #c9c9c9;box-sizing:border-box"></div><div class="a" style="left:119.2px;top:186.5px;width:272.0px;height:38.5px;background:repeating-linear-gradient(135deg,#fdfdfd 0,#fdfdfd 2.3px,#d2d2d2 2.3px,#d2d2d2 2.95px);border:0.8px solid #bdbdbd;box-sizing:border-box"></div><div class="a" style="left:123.0px;top:189.0px;width:270.0px;height:34.0px;background:rgba(255,255,255,0.0)"></div><span class="a" style="left:59.4px;top:196.9px;font-size:6.2px;color:#2e2e2e;line-height:10px;">100 MB</span><span class="a" style="left:59.4px;top:204.7px;font-size:6.2px;color:#2e2e2e;line-height:10px;">Correcto (Partición c</span><span class="a" style="left:126.6px;top:189.3px;font-size:6.2px;color:#2e2e2e;line-height:10px;">(C:)</span><span class="a" style="left:123.0px;top:196.9px;font-size:6.2px;color:#2e2e2e;line-height:10px;">465,08 GB NTFS</span><span class="a" style="left:123.0px;top:204.7px;font-size:6.2px;color:#2e2e2e;line-height:10px;">Correcto (Arranque, Archivo de pa</span><div class="a" style="left:3.7px;top:288.1px;width:5.0px;height:5.5px;background:#000"></div><span class="a" style="left:11.4px;top:285.9px;font-size:6.2px;color:#2e2e2e;line-height:10px;">No asignado</span><div class="a" style="left:49.0px;top:288.1px;width:5.3px;height:5.5px;background:#00007f"></div><span class="a" style="left:57.0px;top:285.9px;font-size:6.2px;color:#2e2e2e;line-height:10px;">Partición primaria</span><div class="a" style="left:0.0px;top:296.0px;width:390.0px;height:13.0px;background:#f0f0f0;border-top:0.8px solid #dadada"></div></div>
<div class="w" style="left:788.6px;top:50px;width:60px;height:150px;"><svg class="a" style="left:4.8px;top:5.0px" width="8" height="6" viewBox="0 0 8 6"><rect width="8" height="6" fill="#9cc6ea"/><path d="M0.5 5L2.5 2.5L4 4L6 1.5L7.5 4" fill="none" stroke="#2a6cc0" stroke-width="0.7"/></svg><span class="a" style="left:15.0px;top:2.9px;font-size:6.2px;color:#a3a3a3;line-height:10px;">Administrador de tareas</span><span class="a" style="left:3.4px;top:16.0px;font-size:6.2px;color:#777;line-height:10px;">Archivo</span><span class="a" style="left:32.1px;top:16.0px;font-size:6.2px;color:#777;line-height:10px;">Opciones</span><div class="a" style="left:30.9px;top:28.5px;width:40.0px;height:10.0px;background:#f0f0f0;border-radius:1px"></div><span class="a" style="left:3.4px;top:28.0px;font-size:6.2px;color:#111;line-height:10px;-webkit-text-stroke:0.35px #111">Procesos</span><span class="a" style="left:34.4px;top:28.0px;font-size:6.2px;color:#2e2e2e;line-height:10px;">Rendimiento</span><span class="a" style="left:3.4px;top:57.0px;font-size:6.2px;color:#666;line-height:10px;">Nombre</span><div class="a" style="left:0.0px;top:67.8px;width:60.0px;height:0.7px;background:#e3e3e3"></div><span class="a" style="left:5.7px;top:75.0px;font-size:7.7px;color:#4076c0;line-height:10px;-webkit-text-stroke:0">Aplicaciones</span><svg class="a" style="left:5.4px;top:93.5px" width="3" height="4" viewBox="0 0 3 4"><path d="M0.6 0.4L2.4 2L0.6 3.6" fill="none" stroke="#777" stroke-width="0.6"/></svg><svg class="a" style="left:15.0px;top:91.5px" width="8" height="8" viewBox="0 0 8 8"><rect width="8" height="6" y="1" fill="#9cc6ea"/><path d="M0.5 6L2.5 3.5L4 5L6 2.5L7.5 5" fill="none" stroke="#2a6cc0" stroke-width="0.7"/></svg><span class="a" style="left:26.4px;top:90.5px;font-size:6.2px;color:#2e2e2e;line-height:10px;">Administ</span><svg class="a" style="left:5.4px;top:107.8px" width="3" height="4" viewBox="0 0 3 4"><path d="M0.6 0.4L2.4 2L0.6 3.6" fill="none" stroke="#777" stroke-width="0.6"/></svg><svg class="a" style="left:15.0px;top:105.8px" width="8" height="8" viewBox="0 0 8 8"><rect width="8" height="8" fill="#0d2038"/><text x="1.2" y="6" font-size="4.5" fill="#31a8ff" font-family="Liberation Sans">Ps</text></svg><span class="a" style="left:26.4px;top:104.8px;font-size:6.2px;color:#2e2e2e;line-height:10px;">Adobe Ph</span><svg class="a" style="left:5.4px;top:122.2px" width="3" height="4" viewBox="0 0 3 4"><path d="M0.6 0.4L2.4 2L0.6 3.6" fill="none" stroke="#777" stroke-width="0.6"/></svg><svg class="a" style="left:15.0px;top:120.2px" width="8" height="8" viewBox="0 0 8 8"><rect width="8" height="8" fill="#e8e0f0"/><path d="M0.5 1L4 4.5L7.5 1V7.5H0.5Z" fill="#d44"/><path d="M0.5 1V7.5H2V3Z" fill="#4285f4"/><path d="M7.5 1V7.5H6V3Z" fill="#34a853"/></svg><span class="a" style="left:26.4px;top:119.2px;font-size:6.2px;color:#2e2e2e;line-height:10px;">Gmail</span><svg class="a" style="left:5.4px;top:136.6px" width="3" height="4" viewBox="0 0 3 4"><path d="M0.6 0.4L2.4 2L0.6 3.6" fill="none" stroke="#777" stroke-width="0.6"/></svg><svg class="a" style="left:15.0px;top:134.6px" width="8" height="8" viewBox="0 0 8 8"><circle cx="4" cy="4.5" r="3.8" fill="#1e88c8"/><path d="M1 6Q4 1 7.5 4" fill="none" stroke="#4cd070" stroke-width="1.4"/></svg><span class="a" style="left:26.4px;top:133.6px;font-size:6.2px;color:#2e2e2e;line-height:10px;">Microsoft</span></div>
<div class="w" style="left:385px;top:190.7px;width:470px;height:325px;"><svg class="a" style="left:4.8px;top:3.6px" width="7.2" height="7.8" viewBox="0 0 7.2 7.8"><defs><linearGradient id="evg" x1="0" y1="0" x2="1" y2="1"><stop offset="0" stop-color="#6f86c0"/><stop offset="0.55" stop-color="#b09070"/><stop offset="1" stop-color="#e0a840"/></linearGradient></defs><rect x="0" y="0" width="7.2" height="7.8" rx="0.8" fill="url(#evg)"/><rect x="2.6" y="1" width="2.6" height="5.8" fill="#e9c060" opacity="0.8"/></svg><span class="a" style="left:15.0px;top:2.9px;font-size:6.2px;color:#a3a3a3;line-height:10px;">Visor de eventos</span><span class="a" style="left:5.0px;top:16.3px;font-size:6.2px;color:#2e2e2e;line-height:10px;">Archivo</span><span class="a" style="left:34.4px;top:16.3px;font-size:6.2px;color:#2e2e2e;line-height:10px;">Acción</span><span class="a" style="left:61.6px;top:16.3px;font-size:6.2px;color:#2e2e2e;line-height:10px;">Ver</span><span class="a" style="left:78.4px;top:16.3px;font-size:6.2px;color:#2e2e2e;line-height:10px;">Ayuda</span><div class="a" style="left:0.0px;top:26.8px;width:470.0px;height:0.7px;background:#e6e6e6"></div><svg class="a" style="left:2.0px;top:30.3px" width="20" height="8" viewBox="0 0 20 8"><path d="M0.2 3.8L3.8 0.6V2.4H8.2V5.4H3.8V7.2Z" fill="#a2a2a2" stroke="#a2a2a2" stroke-width="0.4" stroke-linejoin="round"/><path d="M19.5 3.8L15.9 0.6V2.4H11.5V5.4H15.9V7.2Z" fill="#a2a2a2" stroke="#a2a2a2" stroke-width="0.4" stroke-linejoin="round"/></svg><div class="a" style="left:26.0px;top:28.3px;width:0.7px;height:10.0px;background:#d5d5d5"></div><div class="a" style="left:28.6px;top:27.5px;width:13.3px;height:11.0px;background:#cfe3f5"></div><svg class="a" style="left:31.0px;top:29.8px" width="8.5" height="7.5" viewBox="0 0 8.5 7.5"><rect x="0.3" y="0.3" width="7.9" height="6.9" fill="#dfe3e8" stroke="#9aa3ad" stroke-width="0.6"/><rect x="0.3" y="0.3" width="7.9" height="1.8" fill="#7e8a98"/><rect x="1.5" y="3" width="5.5" height="3.3" fill="#f4f6f8"/><rect x="3.75" y="4.3" width="2" height="2" fill="#58b050"/></svg><svg class="a" style="left:47.0px;top:29.1px" width="7" height="8.5" viewBox="0 0 7 8.5"><rect x="0" y="0" width="7" height="8.5" rx="0.6" fill="#2c4d9e"/><rect x="0.8" y="0.5" width="5.4" height="7.5" fill="#3a62c0"/><path d="M2.3 2.8Q2.5 1.5 3.6 1.5Q4.8 1.6 4.8 2.8Q4.7 3.6 3.6 4.3V5.3" fill="none" stroke="#fff" stroke-width="0.8"/><rect x="3.2" y="6" width="0.9" height="0.9" fill="#fff"/></svg><div class="a" style="left:56.2px;top:27.5px;width:12.4px;height:11.0px;background:#d6e7f6"></div><svg class="a" style="left:58.2px;top:29.8px" width="8.5" height="7.5" viewBox="0 0 8.5 7.5"><rect x="0.3" y="0.3" width="7.9" height="6.9" fill="#dfe3e8" stroke="#9aa3ad" stroke-width="0.6"/><rect x="0.3" y="0.3" width="7.9" height="1.8" fill="#7e8a98"/><rect x="1.5" y="3" width="5.5" height="3.3" fill="#f4f6f8"/><rect x="3.75" y="4.3" width="2" height="2" fill="#58b050"/></svg><div class="a" style="left:0.0px;top:40.3px;width:470.0px;height:0.8px;background:#dcdcdc"></div><div class="a" style="left:0.0px;top:42.3px;width:104.0px;height:270.0px;background:#fff"></div><div class="a" style="left:2.0px;top:44.8px;width:76.5px;height:8.0px;background:#e3e3e3"></div><svg class="a" style="left:3.6px;top:44.8px" width="7" height="8" viewBox="0 0 7 8"><rect x="0" y="0" width="7" height="8" fill="#7a8fb0"/><rect x="1" y="1" width="5" height="6" fill="#d9a850"/><rect x="1" y="1" width="2.5" height="6" fill="#5070a8"/></svg><span class="a" style="left:13.0px;top:43.8px;font-size:6.2px;color:#2e2e2e;line-height:10px;">Visor de eventos (local)</span><svg class="a" style="left:5.5px;top:55.9px" width="3" height="4" viewBox="0 0 3 4"><path d="M0.6 0.4L2.4 2L0.6 3.6" fill="none" stroke="#888" stroke-width="0.6"/></svg><svg class="a" style="left:12.0px;top:53.9px" width="9" height="8" viewBox="0 0 9 8"><rect x="0" y="1" width="8" height="7" fill="#f3d27a"/><rect x="0" y="0" width="4" height="2" fill="#f3d27a"/></svg><span class="a" style="left:23.0px;top:52.9px;font-size:6.2px;color:#2e2e2e;line-height:10px;">Vistas personalizadas</span><svg class="a" style="left:5.5px;top:65.2px" width="3" height="4" viewBox="0 0 3 4"><path d="M0.6 0.4L2.4 2L0.6 3.6" fill="none" stroke="#888" stroke-width="0.6"/></svg><svg class="a" style="left:12.0px;top:63.2px" width="9" height="8" viewBox="0 0 9 8"><rect x="0" y="1" width="8" height="7" fill="#f3d27a"/><rect x="0" y="0" width="4" height="2" fill="#f3d27a"/><rect x="4" y="4" width="4" height="4" fill="#3a5fb0"/></svg><span class="a" style="left:23.0px;top:62.2px;font-size:6.2px;color:#2e2e2e;line-height:10px;">Registros de Windows</span><svg class="a" style="left:5.5px;top:74.5px" width="3" height="4" viewBox="0 0 3 4"><path d="M0.6 0.4L2.4 2L0.6 3.6" fill="none" stroke="#888" stroke-width="0.6"/></svg><svg class="a" style="left:12.0px;top:72.5px" width="9" height="8" viewBox="0 0 9 8"><rect x="0" y="1" width="8" height="7" fill="#f3d27a"/><rect x="0" y="0" width="4" height="2" fill="#f3d27a"/></svg><span class="a" style="left:23.0px;top:71.5px;font-size:6.2px;color:#2e2e2e;line-height:10px;">Registros de aplicaciones y s</span><svg class="a" style="left:12.0px;top:81.9px" width="9" height="8" viewBox="0 0 9 8"><rect x="0" y="1" width="8" height="7" fill="#f5e2b0"/><rect x="0" y="0" width="4" height="2" fill="#f5e2b0"/></svg><span class="a" style="left:23.0px;top:80.9px;font-size:6.2px;color:#2e2e2e;line-height:10px;">Suscripciones</span><div class="a" style="left:10.0px;top:307.8px;width:70.0px;height:1.2px;background:#a9a9a9"></div><div class="a" style="left:101.6px;top:42.3px;width:1.0px;height:270.5px;background:#cfcfcf"></div><div class="a" style="left:0.0px;top:312.3px;width:102.0px;height:0.8px;background:#bdbdbd"></div><div class="a" style="left:104.0px;top:42.8px;width:252.0px;height:270.0px;background:#f0f0f0"></div><div class="a" style="left:104.4px;top:43.1px;width:251.3px;height:10.7px;background:#6f6f6f"></div><span class="a" style="left:107.9px;top:43.5px;font-size:6.2px;color:#fff;line-height:10px;font-weight:bold;">Visor de eventos (local)</span><div class="a" style="left:104.4px;top:53.8px;width:251.3px;height:16.0px;background:linear-gradient(#9c9c9c,#8a8a8a)"></div><span class="a" style="left:113.4px;top:58.3px;font-size:9.3px;color:#ececec;line-height:10px;-webkit-text-stroke:0">Introducción y resumen</span><span class="a" style="left:237.5px;top:61.6px;font-size:6.0px;color:#ededed;line-height:10px;">Última actualización: 25/11/2021 13:21:1...</span><div class="a" style="left:105.3px;top:69.8px;width:250.4px;height:243.0px;background:#f7f7f7"></div><div class="a" style="left:104.3px;top:53.8px;width:1.0px;height:252.0px;background:#a5a5a5"></div><div class="a" style="left:110.0px;top:75.3px;width:239.6px;height:12.2px;background:linear-gradient(#eaeaea,#b3b3b3);border:0.7px solid #a5a5a5;box-sizing:border-box;border-radius:1.5px"></div><span class="a" style="left:113.6px;top:76.4px;font-size:6.2px;color:#2e2e2e;line-height:10px;">Introducción</span><svg class="a" style="left:342.5px;top:79.9px" width="3" height="3" viewBox="0 0 3 3"><path d="M0 2.5L1.5 0.5L3 2.5Z" fill="#222"/></svg><div class="a" style="left:110.0px;top:87.8px;width:239.6px;height:33.0px;background:#f0f0f0"></div><svg class="a" style="left:117.4px;top:93.1px" width="12" height="15" viewBox="0 0 12 15"><rect x="1" y="0.5" width="8.5" height="13" rx="1.5" fill="#8497b5"/><rect x="2" y="1.5" width="6.5" height="11" rx="1" fill="#c9d3e3"/><rect x="3.2" y="3" width="4" height="2.2" fill="#e7d35a"/><rect x="3.2" y="5.2" width="4" height="1.5" fill="#7cc46a"/><circle cx="5.2" cy="9.3" r="1.9" fill="#d8506a"/><circle cx="5.2" cy="9.3" r="0.8" fill="#f3d0d8"/><path d="M8.5 11.5L11.8 13.2L9.2 14.8Z" fill="#111"/></svg><span class="a" style="left:137.4px;top:92.0px;font-size:6.07px;color:#2e2e2e;line-height:10px;">Para ver los eventos que se produjeron en el equipo, seleccione el nodo</span><span class="a" style="left:137.4px;top:99.4px;font-size:6.07px;color:#2e2e2e;line-height:10px;">adecuado de vista personalizada, registro u origen en el árbol de la</span><span class="a" style="left:137.4px;top:106.9px;font-size:6.07px;color:#2e2e2e;line-height:10px;">consola. La vista personalizada Eventos administrativos contiene todos</span><span class="a" style="left:137.4px;top:114.4px;font-size:6.07px;color:#2e2e2e;line-height:10px;clip-path:inset(0 0 4.6px 0)">los eventos administrativos, independientemente del origen. A</span><div class="a" style="left:345.4px;top:95.9px;width:1.4px;height:12.0px;background:#9a9a9a"></div><div class="a" style="left:110.0px;top:126.8px;width:239.6px;height:12.2px;background:linear-gradient(#eaeaea,#b3b3b3);border:0.7px solid #a5a5a5;box-sizing:border-box;border-radius:1.5px"></div><span class="a" style="left:113.6px;top:127.9px;font-size:6.2px;color:#2e2e2e;line-height:10px;">Resumen de eventos administrativos</span><svg class="a" style="left:342.5px;top:131.4px" width="3" height="3" viewBox="0 0 3 3"><path d="M0 2.5L1.5 0.5L3 2.5Z" fill="#222"/></svg><div class="a" style="left:115.0px;top:143.8px;width:229.0px;height:32.1px;background:#fff;border:0.7px solid #bdbdbd;box-sizing:border-box"></div><div class="a" style="left:115.7px;top:167.3px;width:227.6px;height:7.9px;background:#f0f0f0"></div><span class="a" style="left:119.0px;top:146.2px;font-size:6.2px;color:#2e2e2e;line-height:10px;">Tipo de evento</span><span class="a" style="left:173.8px;top:146.2px;font-size:6.2px;color:#2e2e2e;line-height:10px;">Id. del e...</span><span class="a" style="left:207.5px;top:146.2px;font-size:6.2px;color:#2e2e2e;line-height:10px;">Origen</span><span class="a" style="left:259.0px;top:146.2px;font-size:6.2px;color:#2e2e2e;line-height:10px;">Registro</span><span class="a" style="left:299.0px;top:146.2px;font-size:6.2px;color:#2e2e2e;line-height:10px;">Última hora</span><span class="a" style="left:127.0px;top:157.8px;font-size:6.2px;color:#2e2e2e;line-height:10px;">Crítico</span><span class="a" style="left:174.0px;top:157.8px;font-size:6.2px;color:#2e2e2e;line-height:10px;">-</span><span class="a" style="left:208.0px;top:157.8px;font-size:6.2px;color:#2e2e2e;line-height:10px;">-</span><span class="a" style="left:260.0px;top:157.8px;font-size:6.2px;color:#2e2e2e;line-height:10px;">-</span><span class="a" style="left:329.5px;top:157.8px;font-size:6.2px;color:#2e2e2e;line-height:10px;">0</span><div class="a" style="left:125.5px;top:169.7px;width:148.0px;height:1.2px;background:#8c8c8c"></div><div class="a" style="left:110.0px;top:186.3px;width:239.6px;height:12.3px;background:linear-gradient(#eaeaea,#b3b3b3);border:0.7px solid #a5a5a5;box-sizing:border-box;border-radius:1.5px"></div><span class="a" style="left:113.6px;top:187.4px;font-size:6.2px;color:#2e2e2e;line-height:10px;">Nodos vistos recientemente</span><svg class="a" style="left:342.5px;top:190.9px" width="3" height="3" viewBox="0 0 3 3"><path d="M0 2.5L1.5 0.5L3 2.5Z" fill="#222"/></svg><div class="a" style="left:115.0px;top:203.3px;width:229.0px;height:32.0px;background:#fff;border:0.7px solid #bdbdbd;box-sizing:border-box"></div><div class="a" style="left:115.7px;top:226.8px;width:227.6px;height:7.8px;background:#f0f0f0"></div><span class="a" style="left:119.0px;top:205.7px;font-size:6.2px;color:#2e2e2e;line-height:10px;">Nombre</span><span class="a" style="left:197.0px;top:205.7px;font-size:6.2px;color:#2e2e2e;line-height:10px;">Descripción</span><span class="a" style="left:236.0px;top:205.7px;font-size:6.2px;color:#2e2e2e;line-height:10px;">Modificado</span><span class="a" style="left:314.0px;top:205.7px;font-size:6.2px;color:#2e2e2e;line-height:10px;">Creado</span><div class="a" style="left:125.5px;top:229.2px;width:175.3px;height:1.2px;background:#8c8c8c"></div><div class="a" style="left:110.0px;top:246.3px;width:239.6px;height:11.8px;background:linear-gradient(#eaeaea,#b3b3b3);border:0.7px solid #a5a5a5;box-sizing:border-box;border-radius:1.5px"></div><span class="a" style="left:113.6px;top:247.2px;font-size:6.2px;color:#2e2e2e;line-height:10px;">Resumen de registro</span><svg class="a" style="left:342.5px;top:250.7px" width="3" height="3" viewBox="0 0 3 3"><path d="M0 2.5L1.5 0.5L3 2.5Z" fill="#222"/></svg><div class="a" style="left:115.0px;top:263.3px;width:229.0px;height:31.8px;background:#fff;border:0.7px solid #bdbdbd;box-sizing:border-box"></div><div class="a" style="left:115.7px;top:286.3px;width:227.6px;height:8.1px;background:#f0f0f0"></div><span class="a" style="left:119.0px;top:265.7px;font-size:6.2px;color:#2e2e2e;line-height:10px;">Nombre de registro</span><span class="a" style="left:197.0px;top:265.7px;font-size:6.2px;color:#2e2e2e;line-height:10px;">Tamaño (...</span><span class="a" style="left:236.0px;top:265.7px;font-size:6.2px;color:#2e2e2e;line-height:10px;">Modificado</span><span class="a" style="left:314.0px;top:265.7px;font-size:6.2px;color:#2e2e2e;line-height:10px;">Habilita</span><span class="a" style="left:119.0px;top:277.3px;font-size:6.2px;color:#2e2e2e;line-height:10px;">Windows PowerShell</span><span class="a" style="left:197.0px;top:277.3px;font-size:6.2px;color:#2e2e2e;line-height:10px;">1,07 MB/1...</span><span class="a" style="left:236.0px;top:277.3px;font-size:6.2px;color:#2e2e2e;line-height:10px;">25/11/2021 13:13:29</span><span class="a" style="left:314.0px;top:277.3px;font-size:6.2px;color:#2e2e2e;line-height:10px;">Habilita</span><div class="a" style="left:125.5px;top:288.7px;width:139.5px;height:1.2px;background:#8c8c8c"></div><div class="a" style="left:355.7px;top:42.8px;width:2.0px;height:270.0px;background:#8f8f8f"></div><div class="a" style="left:357.7px;top:42.8px;width:120.0px;height:270.0px;background:#fff"></div><div class="a" style="left:357.7px;top:42.8px;width:120.0px;height:10.5px;background:linear-gradient(#fafafa,#eeeeee);border-top:1.4px solid #8f8f8f;border-bottom:0.7px solid #d0d0d0;box-sizing:border-box"></div><span class="a" style="left:361.7px;top:44.1px;font-size:6.2px;color:#2e2e2e;line-height:10px;font-weight:bold;">Acciones</span><div class="a" style="left:358.5px;top:55.7px;width:120.0px;height:11.6px;background:linear-gradient(#cfdef1,#b4cbe7)"></div><span class="a" style="left:362.6px;top:56.6px;font-size:6.2px;color:#1f2f45;line-height:10px;">Visor de eventos (local)</span><svg class="a" style="left:361.6px;top:70.3px" width="8" height="8" viewBox="0 0 8 8"><path d="M0 2H3L4 3H7V7H0Z" fill="#e3b84a"/></svg><span class="a" style="left:375.0px;top:69.3px;font-size:6.2px;color:#2e2e2e;line-height:10px;">Abrir registro guardado...</span><svg class="a" style="left:361.6px;top:83.1px" width="8" height="8" viewBox="0 0 8 8"><path d="M0 1H7L4.5 4V7L2.5 6V4Z" fill="#e0b030"/><path d="M0 1H3L2.5 4Z" fill="#3a9a50"/></svg><span class="a" style="left:375.0px;top:82.1px;font-size:6.2px;color:#2e2e2e;line-height:10px;">Crear vista personalizada...</span><span class="a" style="left:375.0px;top:94.8px;font-size:6.2px;color:#2e2e2e;line-height:10px;">Importar vista personalizada...</span><span class="a" style="left:375.0px;top:107.6px;font-size:6.2px;color:#2e2e2e;line-height:10px;">Conectarse a otro equipo...</span><span class="a" style="left:375.0px;top:120.3px;font-size:6.2px;color:#2e2e2e;line-height:10px;">Ver</span><svg class="a" style="left:361.6px;top:134.1px" width="8" height="8" viewBox="0 0 8 8"><rect x="0" y="0.5" width="7" height="7" fill="#dff0dc"/><path d="M5.5 2A2.5 2.5 0 1 0 6 5" fill="none" stroke="#3aa040" stroke-width="1"/></svg><span class="a" style="left:375.0px;top:133.1px;font-size:6.2px;color:#2e2e2e;line-height:10px;">Actualizar</span><svg class="a" style="left:361.6px;top:146.8px" width="8" height="8" viewBox="0 0 8 8"><rect x="0.5" y="0" width="6" height="8" fill="#2f5fb3"/><text x="1.5" y="6.5" font-size="6" fill="#fff" font-weight="bold" font-family="Liberation Sans">?</text></svg><span class="a" style="left:375.0px;top:145.8px;font-size:6.2px;color:#2e2e2e;line-height:10px;">Ayuda</span><div class="a" style="left:0.0px;top:312.8px;width:470.0px;height:12.0px;background:#f0f0f0;border-top:0.8px solid #d8d8d8"></div></div>
<div class="a" style="left:0;top:534.8px;width:840px;height:25.2px;background:linear-gradient(rgba(255,255,255,0.25),rgba(255,255,255,0) 35%),linear-gradient(90deg,#dcdfe7 0,#dde2ec 22%,#dde5f1 40%,#dfe6f1 100%);border-top:0.7px solid #c9ced8"></div><svg class="a" style="left:464.3px;top:541.8px" width="11.8" height="11.8" viewBox="0 0 11.8 11.8"><defs><linearGradient id="wl" gradientUnits="userSpaceOnUse" x1="0" y1="0" x2="3" y2="12"><stop offset="0" stop-color="#3bb0f3"/><stop offset="1" stop-color="#1570d0"/></linearGradient></defs><rect x="0" y="0" width="5.6" height="5.6" fill="url(#wl)"/><rect x="6.2" y="0" width="5.6" height="5.6" fill="url(#wl)"/><rect x="0" y="6.2" width="5.6" height="5.6" fill="url(#wl)"/><rect x="6.2" y="6.2" width="5.6" height="5.6" fill="url(#wl)"/></svg><svg class="a" style="left:486.8px;top:542.3px" width="13" height="11.5" viewBox="0 0 13 11.5"><path d="M0.3 1H4.5L5.5 2.2H12.7V11.5H0.3Z" fill="#f2b93a"/><rect x="0.3" y="3" width="12.4" height="8.5" fill="#fbd35c"/><path d="M0.3 9.2Q3 8 6.5 9Q10 8 12.7 9.2V11.5H0.3Z" fill="#1f6fc6"/></svg><svg class="a" style="left:509.8px;top:541.7px" width="13" height="12.5" viewBox="0 0 13 12.5"><circle cx="6.3" cy="6.4" r="6.1" fill="#1669c2"/><path d="M1.5 4.5Q3 0.3 7 0.3Q11.8 0.6 12.5 5.8Q12.3 8.2 10 8.2H7.5Q9.5 6 7 4.6Q4 3.5 1.5 4.5Z" fill="#36c98e"/><path d="M1.5 4.5Q4 3.5 7 4.6Q9.5 6 7.5 8.2H10Q8 11 5.5 10.5Q2.2 9.6 1.5 4.5Z" fill="#1e8ee0"/><circle cx="7.4" cy="7.6" r="1.9" fill="#e3eaf4"/></svg><svg class="a" style="left:532.4px;top:541.7px" width="13" height="12.5" viewBox="0 0 13 12.5"><circle cx="6.5" cy="6.3" r="6.2" fill="#2a9fd8"/><path d="M3 6.3L10 3.5L8.8 9.5L6.5 8L5.5 9.2L5.3 7.3Z" fill="#fff"/></svg><svg class="a" style="left:555px;top:541.7px" width="13" height="12.5" viewBox="0 0 13 12.5"><path d="M0.5 2.5V11.5H3V5.5L6.5 8.5L10 5.5V11.5H12.5V2.5L11.5 1.5L6.5 5.5L1.5 1.5Z" fill="#ea4335"/><path d="M0.5 2.5V11.5H3V4.5Z" fill="#4285f4"/><path d="M12.5 2.5V11.5H10V4.5Z" fill="#34a853"/><path d="M10 4.5L12.5 2.5L11.5 1.5L10 2.7Z" fill="#fbbc04"/></svg><svg class="a" style="left:578.8px;top:541.7px" width="12.5" height="12.5" viewBox="0 0 12.5 12.5"><circle cx="6.25" cy="6.25" r="6.2" fill="#f4f4f6"/><rect x="4.6" y="2.2" width="1.5" height="4" rx="0.7" fill="#36c5f0"/><rect x="2.2" y="6.4" width="4" height="1.5" rx="0.7" fill="#2eb67d"/><rect x="6.4" y="6.4" width="1.5" height="4" rx="0.7" fill="#ecb22e"/><rect x="6.4" y="4.6" width="4" height="1.5" rx="0.7" fill="#e01e5a"/></svg><svg class="a" style="left:600.7px;top:541.7px" width="13.3" height="12.5" viewBox="0 0 13.3 12.5"><circle cx="6.6" cy="6.3" r="6.4" fill="#1ec75a"/><path d="M3.2 4.6Q7 3.4 10.3 5.2M3.6 6.6Q7 5.8 9.7 7.2M4 8.5Q6.8 7.9 9 9" fill="none" stroke="#0d2a18" stroke-width="0.9"/></svg><svg class="a" style="left:624px;top:541.7px" width="12.5" height="12.5" viewBox="0 0 12.5 12.5"><path d="M10.5 3.5A5.5 5.5 0 1 1 8 1.2" fill="none" stroke="#5b7de0" stroke-width="1.4"/><path d="M4 6L6 8.2L11.5 2" fill="none" stroke="#f0b030" stroke-width="1.4"/></svg><svg class="a" style="left:647px;top:541.7px" width="12.5" height="12.5" viewBox="0 0 12.5 12.5"><rect x="0" y="0" width="12.5" height="12.5" rx="2" fill="#fafafa"/><path d="M3.5 3.5H9M6.25 3.5V9.8" stroke="#555" stroke-width="1.3"/></svg><svg class="a" style="left:669.8px;top:541.7px" width="12.6" height="12.5" viewBox="0 0 12.6 12.5"><rect x="0" y="0" width="12.6" height="12.6" rx="2" fill="#001e36"/><text x="2.2" y="9" font-size="6.5" fill="#31a8ff" font-family="Liberation Sans" font-weight="bold">Ps</text></svg><svg class="a" style="left:692.4px;top:541.7px" width="12.5" height="12.5" viewBox="0 0 12.5 12.5"><rect x="0" y="0" width="12.5" height="12.5" rx="2" fill="#001e36"/><text x="2.5" y="9" font-size="6.5" fill="#31a8ff" font-family="Liberation Sans" font-weight="bold">Lr</text></svg><svg class="a" style="left:715px;top:541.7px" width="13" height="12.5" viewBox="0 0 13 12.5"><circle cx="6" cy="7" r="5.5" fill="#2a8ee8"/><path d="M8 2L12.5 0.5L11 5Z" fill="#2a8ee8"/><circle cx="8" cy="5" r="1.2" fill="#fff"/></svg><svg class="a" style="left:738px;top:541.7px" width="12.7" height="12.5" viewBox="0 0 12.7 12.5"><rect x="0" y="0" width="12.7" height="12.7" rx="2" fill="#f2f6ef"/><ellipse cx="6.35" cy="4" rx="2.2" ry="2.6" fill="#4a9a3a"/><ellipse cx="3.5" cy="8" rx="2.4" ry="2" fill="#6ab04a"/><ellipse cx="9.2" cy="8" rx="2.4" ry="2" fill="#6ab04a"/><rect x="5.8" y="6" width="1.1" height="5" fill="#3a7a2a"/></svg><svg class="a" style="left:761.4px;top:541.7px" width="12" height="12.5" viewBox="0 0 12 12.5"><rect x="0" y="0" width="12" height="12" rx="2" fill="#f7f8fa"/><path d="M6 0.8L10.6 3.4V8.6L6 11.2L1.4 8.6V3.4Z" fill="#1d2735"/><path d="M4 6H8M6.5 4.5L8 6L6.5 7.5" fill="none" stroke="#e8f0f8" stroke-width="0.9"/></svg><svg class="a" style="left:785.5px;top:541.7px" width="10" height="12.5" viewBox="0 0 10 12.5"><rect x="0.5" y="0" width="8.5" height="12.5" rx="1" fill="#b9c3d6"/><rect x="1.5" y="1" width="6.5" height="10.5" fill="#dfe4ee"/><rect x="2.5" y="2.5" width="4.5" height="3" fill="#e9c65a"/><rect x="2.5" y="5.5" width="4.5" height="2" fill="#8fc98a"/><circle cx="4.7" cy="9.3" r="1.4" fill="#d66a8a"/></svg><svg class="a" style="left:806.7px;top:541.7px" width="12" height="12.5" viewBox="0 0 12 12.5"><rect x="2" y="1" width="7" height="4" fill="#5a5f66"/><rect x="0.5" y="4.5" width="11" height="4.5" rx="0.8" fill="#c9ced6"/><rect x="1.5" y="5.5" width="9" height="2" fill="#eef1f4"/><rect x="3" y="9" width="6" height="2.5" fill="#8a9099"/><rect x="8.5" y="6" width="1.5" height="1" fill="#3a8ad8"/></svg><svg class="a" style="left:829px;top:541.7px" width="12" height="12.5" viewBox="0 0 12 12.5"><rect x="0.5" y="2" width="10" height="3" rx="0.8" fill="#5d626a"/><rect x="0" y="5" width="11" height="4" rx="0.8" fill="#d0d4da"/><rect x="2" y="9" width="2" height="2.5" fill="#888"/><rect x="7" y="9" width="2" height="2.5" fill="#888"/></svg><div class="a" style="left:788.5px;top:556px;width:3px;height:1.2px;background:#7a8290;border-radius:1px"></div><div class="a" style="left:811.0px;top:556px;width:3px;height:1.2px;background:#7a8290;border-radius:1px"></div><div class="a" style="left:833.5px;top:556px;width:3px;height:1.2px;background:#7a8290;border-radius:1px"></div>
</body></html>
